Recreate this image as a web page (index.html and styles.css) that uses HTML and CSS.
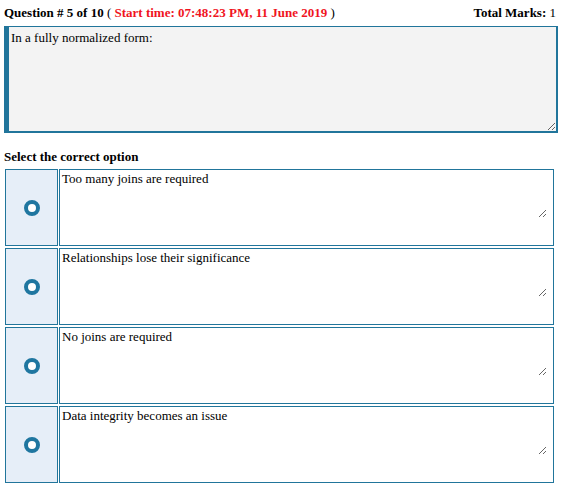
FILE: index.html
```html
<!DOCTYPE html>
<html>
<head>
<meta charset="utf-8">
<link rel="stylesheet" href="styles.css">
</head>
<body>
<div class="quiz">
  <div class="head">
    <div class="title"><b>Question # 5 of 10</b> ( <b class="time">Start time: 07:48:23 PM, 11 June 2019</b> )</div>
    <div class="marks"><b>Total Marks:</b> 1</div>
  </div>
  <textarea class="question" readonly>In a fully normalized form:</textarea>
  <div class="prompt">Select the correct option</div>
  <div class="options">
    <div class="pick"><span class="radio"></span></div>
    <div class="cell"><textarea class="answer" readonly>Too many joins are required</textarea></div>
    <div class="pick"><span class="radio"></span></div>
    <div class="cell"><textarea class="answer" readonly>Relationships lose their significance</textarea></div>
    <div class="pick"><span class="radio"></span></div>
    <div class="cell"><textarea class="answer" readonly>No joins are required</textarea></div>
    <div class="pick"><span class="radio"></span></div>
    <div class="cell"><textarea class="answer" readonly>Data integrity becomes an issue</textarea></div>
  </div>
</div>
</body>
</html>
```
FILE: styles.css
```css
html, body {
  margin: 0;
  padding: 0;
  background: #fff;
}

body {
  font-family: "Liberation Serif", "Times New Roman", serif;
  font-size: 13px;
  color: #000;
}

.quiz {
  padding: 5px 7px 0 4px;
}

.head {
  display: flex;
  justify-content: space-between;
  line-height: 16px;
  height: 16px;
}

.time {
  color: #f0141e;
}

.marks {
  padding-right: 2px;
}

textarea {
  font-family: "Liberation Serif", "Times New Roman", serif;
  font-size: 13px;
  color: #000;
  box-sizing: border-box;
  outline: none;
  margin: 0;
  display: block;
}

.question {
  margin-top: 5px;
  width: 554px;
  height: 107px;
  background: #f3f3f3;
  border: 1px solid #21759b;
  border-left-width: 5px;
  border-bottom-width: 2px;
  border-right-width: 2px;
  padding: 3px 2px;
}

.prompt {
  font-weight: bold;
  margin-top: 16px;
  line-height: 16px;
}

.options {
  display: grid;
  grid-template-columns: 53px 495px;
  grid-auto-rows: 77px;
  column-gap: 1px;
  row-gap: 2px;
  margin-top: 4px;
  margin-left: 1px;
}

.pick {
  box-sizing: border-box;
  border: 1px solid #21759b;
  background: #e6eef8;
  display: flex;
  align-items: center;
  justify-content: center;
}

.radio {
  box-sizing: border-box;
  width: 16px;
  height: 16px;
  border: 4px solid #1f76a0;
  border-radius: 50%;
  background: #fff;
}

.cell {
  box-sizing: border-box;
  border: 1px solid #21759b;
  background: #fff;
}

.answer {
  width: 487px;
  height: 48px;
  border: none;
  background: #fff;
  padding: 1px 2px;
}
```
